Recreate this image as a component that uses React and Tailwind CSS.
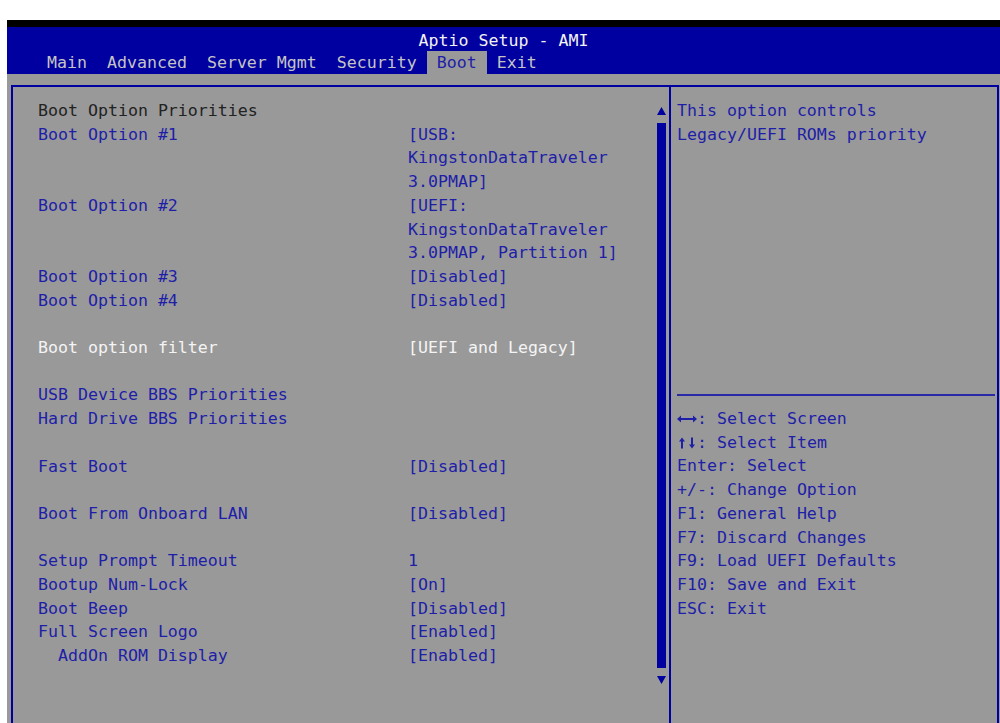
const TABS = ['Main', 'Advanced', 'Server Mgmt', 'Security', 'Boot', 'Exit']

// kind: title | item | active | blank
const ROWS = [
  { kind: 'title', label: 'Boot Option Priorities' },
  { kind: 'item', label: 'Boot Option #1', value: ['[USB:', 'KingstonDataTraveler', '3.0PMAP]'] },
  { kind: 'item', label: 'Boot Option #2', value: ['[UEFI:', 'KingstonDataTraveler', '3.0PMAP, Partition 1]'] },
  { kind: 'item', label: 'Boot Option #3', value: ['[Disabled]'] },
  { kind: 'item', label: 'Boot Option #4', value: ['[Disabled]'] },
  { kind: 'blank' },
  { kind: 'active', label: 'Boot option filter', value: ['[UEFI and Legacy]'] },
  { kind: 'blank' },
  { kind: 'item', label: 'USB Device BBS Priorities' },
  { kind: 'item', label: 'Hard Drive BBS Priorities' },
  { kind: 'blank' },
  { kind: 'item', label: 'Fast Boot', value: ['[Disabled]'] },
  { kind: 'blank' },
  { kind: 'item', label: 'Boot From Onboard LAN', value: ['[Disabled]'] },
  { kind: 'blank' },
  { kind: 'item', label: 'Setup Prompt Timeout', value: ['1'] },
  { kind: 'item', label: 'Bootup Num-Lock', value: ['[On]'] },
  { kind: 'item', label: 'Boot Beep', value: ['[Disabled]'] },
  { kind: 'item', label: 'Full Screen Logo', value: ['[Enabled]'] },
  { kind: 'item', label: '  AddOn ROM Display', value: ['[Enabled]'] },
]

// flechas dibujadas en una celda de 10x12
const ARROWS = {
  left: '0,6 4,2.5 4,5 10,5 10,7 4,7 4,9.5',
  right: '10,6 6,2.5 6,5 0,5 0,7 6,7 6,9.5',
  up: '3,0.5 0,4.5 2,4.5 2,11.5 4,11.5 4,4.5 6,4.5',
  down: '3,11.5 0,7.5 2,7.5 2,0.5 4,0.5 4,7.5 6,7.5',
}

const KEYS = [
  [['left', 'right'], ': Select Screen'],
  [['up', 'down'], ': Select Item'],
  [null, 'Enter: Select'],
  [null, '+/-: Change Option'],
  [null, 'F1: General Help'],
  [null, 'F7: Discard Changes'],
  [null, 'F9: Load UEFI Defaults'],
  [null, 'F10: Save and Exit'],
  [null, 'ESC: Exit'],
]

function Arrow({ dir }) {
  const vertical = dir === 'up' || dir === 'down'
  return (
    <span className="inline-flex w-[10px] items-center justify-center">
      <svg width={vertical ? 6 : 10} height="12" viewBox={vertical ? '0 0 6 12' : '0 0 10 12'}>
        <polygon points={ARROWS[dir]} fill="#1e1ea8" />
      </svg>
    </span>
  )
}

function Row({ row }) {
  if (row.kind === 'blank') return <div className="h-[23.7px]" />
  const color =
    row.kind === 'title' ? 'text-[#222222]' : row.kind === 'active' ? 'text-[#f4f4f4]' : 'text-[#1e1ea8]'
  return (
    <div className={`grid grid-cols-[370px_1fr] ${color}`}>
      <div className="whitespace-pre">{row.label}</div>
      <div className="whitespace-pre">
        {(row.value ?? []).map((v) => (
          <div key={v}>{v}</div>
        ))}
      </div>
    </div>
  )
}

export default function App() {
  return (
    <div
      className="min-h-screen bg-white pt-[20px] pl-[7px] text-[16.6px] leading-[23.7px]"
      style={{ fontFamily: '"DejaVu Sans Mono", "Liberation Mono", monospace' }}
    >
      <div className="h-[7px] bg-black" />
      {/* Cabecera */}
      <div className="h-[47px] bg-[#0000a0]">
        <div className="flex h-[24px] items-center justify-center pt-[3px] text-[#f2f2f2]">Aptio Setup - AMI</div>
        <div className="flex h-[23px] pl-[30px]">
          {TABS.map((t) => (
            <div
              key={t}
              className={`flex items-center px-[10px] pt-[1px] whitespace-pre ${
                t === 'Boot' ? 'bg-[#999999] text-[#1e1ea8]' : 'text-[#c4c4c4]'
              }`}
            >
              {t}
            </div>
          ))}
        </div>
      </div>

      {/* Cuerpo */}
      <div className="h-[649px] overflow-hidden bg-[#999999] pt-[11px] pl-[4px] pr-[1px]">
        <div className="flex h-[660px] border-2 border-b-0 border-[#0000a0]">
          {/* Lista de opciones */}
          <div className="flex flex-1 pt-[12px]">
            <div className="flex-1 pl-[25px]">
              {ROWS.map((r, i) => (
                <Row key={i} row={r} />
              ))}
            </div>
            <div className="mr-[3px] flex w-[9px] flex-col items-center">
              <div className="flex h-[23.7px] items-center">
                <svg width="9" height="8" viewBox="0 0 9 8">
                  <polygon points="4.5,0 9,8 0,8" fill="#0000a0" />
                </svg>
              </div>
              <div className="h-[521.4px] w-full bg-[#0000a0]" />
              <div className="h-[23.7px] w-full bg-[radial-gradient(#0000a0_0.8px,transparent_0.8px)] bg-[length:2px_2px]" />
              <div className="flex h-[23.7px] items-center">
                <svg width="9" height="8" viewBox="0 0 9 8">
                  <polygon points="0,0 9,0 4.5,8" fill="#0000a0" />
                </svg>
              </div>
            </div>
          </div>

          {/* Ayuda */}
          <div className="w-[328px] border-l-2 border-[#0000a0] pt-[12px] pl-[6px] text-[#1e1ea8]">
            <div className="h-[284.4px]">
              <div>This option controls</div>
              <div>Legacy/UEFI ROMs priority</div>
            </div>
            <div className="flex h-[23.7px] items-center pr-[2px]">
              <div className="h-[2px] w-full bg-[#2a2aa8]" />
            </div>
            {KEYS.map(([arrows, text]) => (
              <div key={text} className="flex whitespace-pre">
                {arrows && arrows.map((a) => <Arrow key={a} dir={a} />)}
                <span>{text}</span>
              </div>
            ))}
          </div>
        </div>
      </div>
    </div>
  )
}
